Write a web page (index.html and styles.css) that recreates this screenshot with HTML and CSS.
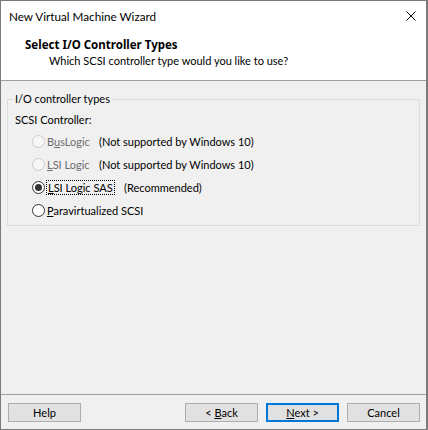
FILE: index.html
```html
<!DOCTYPE html>
<html lang="en">
<head>
    <meta charset="UTF-8">
    <title>New Virtual Machine Wizard</title>
    <link rel="stylesheet" href="styles.css">
</head>
<body>
    <div class="window">
        <div class="titlebar">
            <span class="title">New Virtual Machine Wizard</span>
            <span class="close">
                <svg width="10" height="10" viewBox="0 0 10 10"><path d="M0.5 0.5L9.5 9.5M9.5 0.5L0.5 9.5" stroke="#000" stroke-width="1"/></svg>
            </span>
        </div>

        <div class="header">
            <div class="heading">Select I/O Controller Types</div>
            <div class="subheading">Which SCSI controller type would you like to use?</div>
        </div>

        <div class="content">
            <fieldset class="group">
                <legend>I/O controller types</legend>
                <div class="group-label">SCSI Controller:</div>

                <div class="option disabled">
                    <span class="radio"></span>
                    <span class="opt-label short">B<u>u</u>sLogic</span>
                    <span class="note">(Not supported by Windows 10)</span>
                </div>
                <div class="option disabled">
                    <span class="radio"></span>
                    <span class="opt-label short"><u>L</u>SI Logic</span>
                    <span class="note">(Not supported by Windows 10)</span>
                </div>
                <div class="option">
                    <span class="radio checked"></span>
                    <span class="opt-label long"><span class="focus"><u>L</u>SI Logic SAS</span></span>
                    <span class="note">(Recommended)</span>
                </div>
                <div class="option">
                    <span class="radio"></span>
                    <span class="opt-label"><u>P</u>aravirtualized SCSI</span>
                </div>
            </fieldset>
        </div>

        <div class="footer">
            <button class="btn">Help</button>
            <div class="spacer"></div>
            <button class="btn">&lt; <u>B</u>ack</button>
            <button class="btn default"><u>N</u>ext &gt;</button>
            <button class="btn">Cancel</button>
        </div>
    </div>
</body>
</html>
```

FILE: styles.css
```css
body {
    margin: 0;
    font-family: Lato, 'Noto Sans', sans-serif;
    font-size: 11px;
    color: #000;
    background: #f0f0f0;
}
.window {
    width: 428px;
    height: 430px;
    box-sizing: border-box;
    border: 1px solid #7a7a7a;
    border-right-width: 2px;
    display: flex;
    flex-direction: column;
    background: #f0f0f0;
}
.titlebar {
    height: 29px;
    background: #fff;
    display: flex;
    align-items: center;
    padding: 0 0 0 8px;
}
.title {
    flex: 1;
    font-size: 11.7px;
    margin-top: 1px;
}
.close {
    width: 30px;
    display: flex;
    justify-content: center;
    align-items: center;
}
.header {
    height: 51px;
    background: #fff;
    border-bottom: 1px solid #a0a0a0;
    padding: 6px 0 0 24px;
    box-sizing: border-box;
}
.heading {
    font-family: 'Noto Sans', sans-serif;
    font-weight: bold;
    font-size: 11.5px;
    line-height: 17px;
}
.subheading {
    padding-left: 24px;
    line-height: 16px;
}
.content {
    flex: 1;
    padding: 11px 6px 0 6px;
}
.group {
    margin: 0;
    padding: 0 5px 0 5px;
    border: 1px solid #dcdcdc;
    height: 134px;
    box-sizing: border-box;
}
.group legend {
    padding: 0 2px;
    line-height: 14px;
}
.group-label {
    padding-left: 2px;
    margin-top: 6px;
    margin-bottom: 2px;
    line-height: 16px;
}
.option {
    display: flex;
    align-items: center;
    height: 23px;
    padding-left: 19px;
    white-space: nowrap;
}
.radio {
    width: 11px;
    height: 11px;
    border: 1px solid #333;
    border-radius: 50%;
    background: #fff;
    position: relative;
    flex: none;
}
.radio.checked::after {
    content: '';
    position: absolute;
    left: 2px;
    top: 2px;
    width: 7px;
    height: 7px;
    border-radius: 50%;
    background: #333;
}
.disabled .radio {
    border-color: #cccccc;
    background: #f7f7f7;
}
.disabled .opt-label {
    color: #6d6d6d;
}
.opt-label {
    padding-left: 2px;
    flex: none;
    box-sizing: border-box;
}
.opt-label.short {
    width: 54px;
}
.opt-label.long {
    width: 79px;
}
.focus {
    outline: 1px dotted #000;
    padding: 0 1px;
}
.footer {
    height: 35px;
    border-top: 1px solid #a0a0a0;
    display: flex;
    align-items: flex-start;
    gap: 8px;
    padding: 8px 6px 0 7px;
    box-sizing: border-box;
}
.spacer {
    flex: 1;
}
.btn {
    width: 73px;
    height: 19px;
    margin: 0;
    padding: 0;
    font-family: inherit;
    font-size: 11px;
    color: #000;
    background: #e1e1e1;
    border: 1px solid #adadad;
    line-height: 16px;
}
.btn.default {
    border: 2px solid #0078d7;
}
```
